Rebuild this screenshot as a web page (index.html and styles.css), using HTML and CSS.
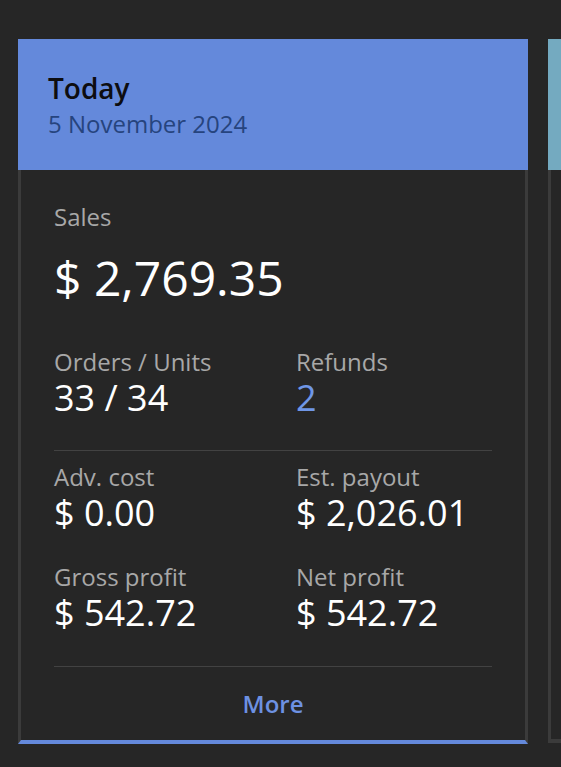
FILE: index.html
```html
<!DOCTYPE html>
<html lang="en">
<head>
<meta charset="utf-8">
<title>Sales summary</title>
<link rel="stylesheet" href="styles.css">
</head>
<body>
<div class="deck">
  <section class="card card-blue">
    <header class="card-head">
      <div class="title">Today</div>
      <div class="date">5 November 2024</div>
    </header>
    <div class="card-body">
      <div class="label">Sales</div>
      <div class="big">$ 2,769.35</div>
      <div class="grid grid-first">
        <div class="stat"><div class="label">Orders / Units</div><div class="value">33 / 34</div></div>
        <div class="stat"><div class="label">Refunds</div><div class="value link">2</div></div>
      </div>
      <hr class="rule rule-a">
      <div class="grid">
        <div class="stat"><div class="label">Adv. cost</div><div class="value">$ 0.00</div></div>
        <div class="stat"><div class="label">Est. payout</div><div class="value">$ 2,026.01</div></div>
        <div class="stat"><div class="label">Gross profit</div><div class="value">$ 542.72</div></div>
        <div class="stat"><div class="label">Net profit</div><div class="value">$ 542.72</div></div>
      </div>
      <hr class="rule rule-b">
      <div class="more">More</div>
    </div>
  </section>
  <section class="card card-teal" aria-hidden="true">
    <header class="card-head card-head-empty"></header>
    <div class="card-body card-body-empty"></div>
  </section>
</div>
</body>
</html>
```

FILE: styles.css
```css
html, body {
  margin: 0;
  padding: 0;
  background: #262626;
}
body {
  font-family: "Open Sans", "Noto Sans", sans-serif;
  width: 561px;
  height: 767px;
  overflow: hidden;
}
.deck {
  display: flex;
  gap: 20px;
  padding: 39px 0 0 18px;
  overflow: hidden;
}
.card {
  width: 510px;
  flex: 0 0 510px;
  display: flex;
  flex-direction: column;
}
.card-head {
  padding: 32px 30px 31px;
}
.card-head-empty {
  padding: 0;
  height: 131px;
}
.card-blue .card-head { background: #6489db; }
.card-teal .card-head { background: #74aac0; }
.title {
  font-size: 28px;
  line-height: 34px;
  font-weight: 600;
  color: #0d0d10;
}
.date {
  margin-top: 4px;
  font-size: 24px;
  line-height: 30px;
  color: #26447e;
}
.card-body {
  border-left: 3px solid #3b3b3b;
  border-right: 3px solid #3b3b3b;
  border-bottom: 4px solid #6489db;
  padding: 33px 33px 0;
}
.card-body-empty {
  border-bottom-color: #3b3b3b;
  height: 536px;
}
.label {
  font-size: 24px;
  line-height: 28px;
  color: #a8a8a8;
}
.big {
  margin-top: 17px;
  font-size: 48px;
  line-height: 60px;
  font-weight: 500;
  color: #ffffff;
}
.grid {
  display: grid;
  grid-template-columns: 242px 1fr;
  row-gap: 28px;
}
.grid-first { margin-top: 40px; }
.value {
  font-size: 36px;
  line-height: 44px;
  color: #ffffff;
}
.value.link { color: #6f96e6; }
.rule {
  border: 0;
  height: 1px;
  background: #424242;
  margin: 0;
}
.rule-a { margin: 30px 0 12px; }
.rule-b { margin: 31px 0 0; }
.more {
  padding: 23px 0 22px;
  text-align: center;
  font-size: 24px;
  line-height: 28px;
  font-weight: 600;
  color: #6d91e2;
}
```
